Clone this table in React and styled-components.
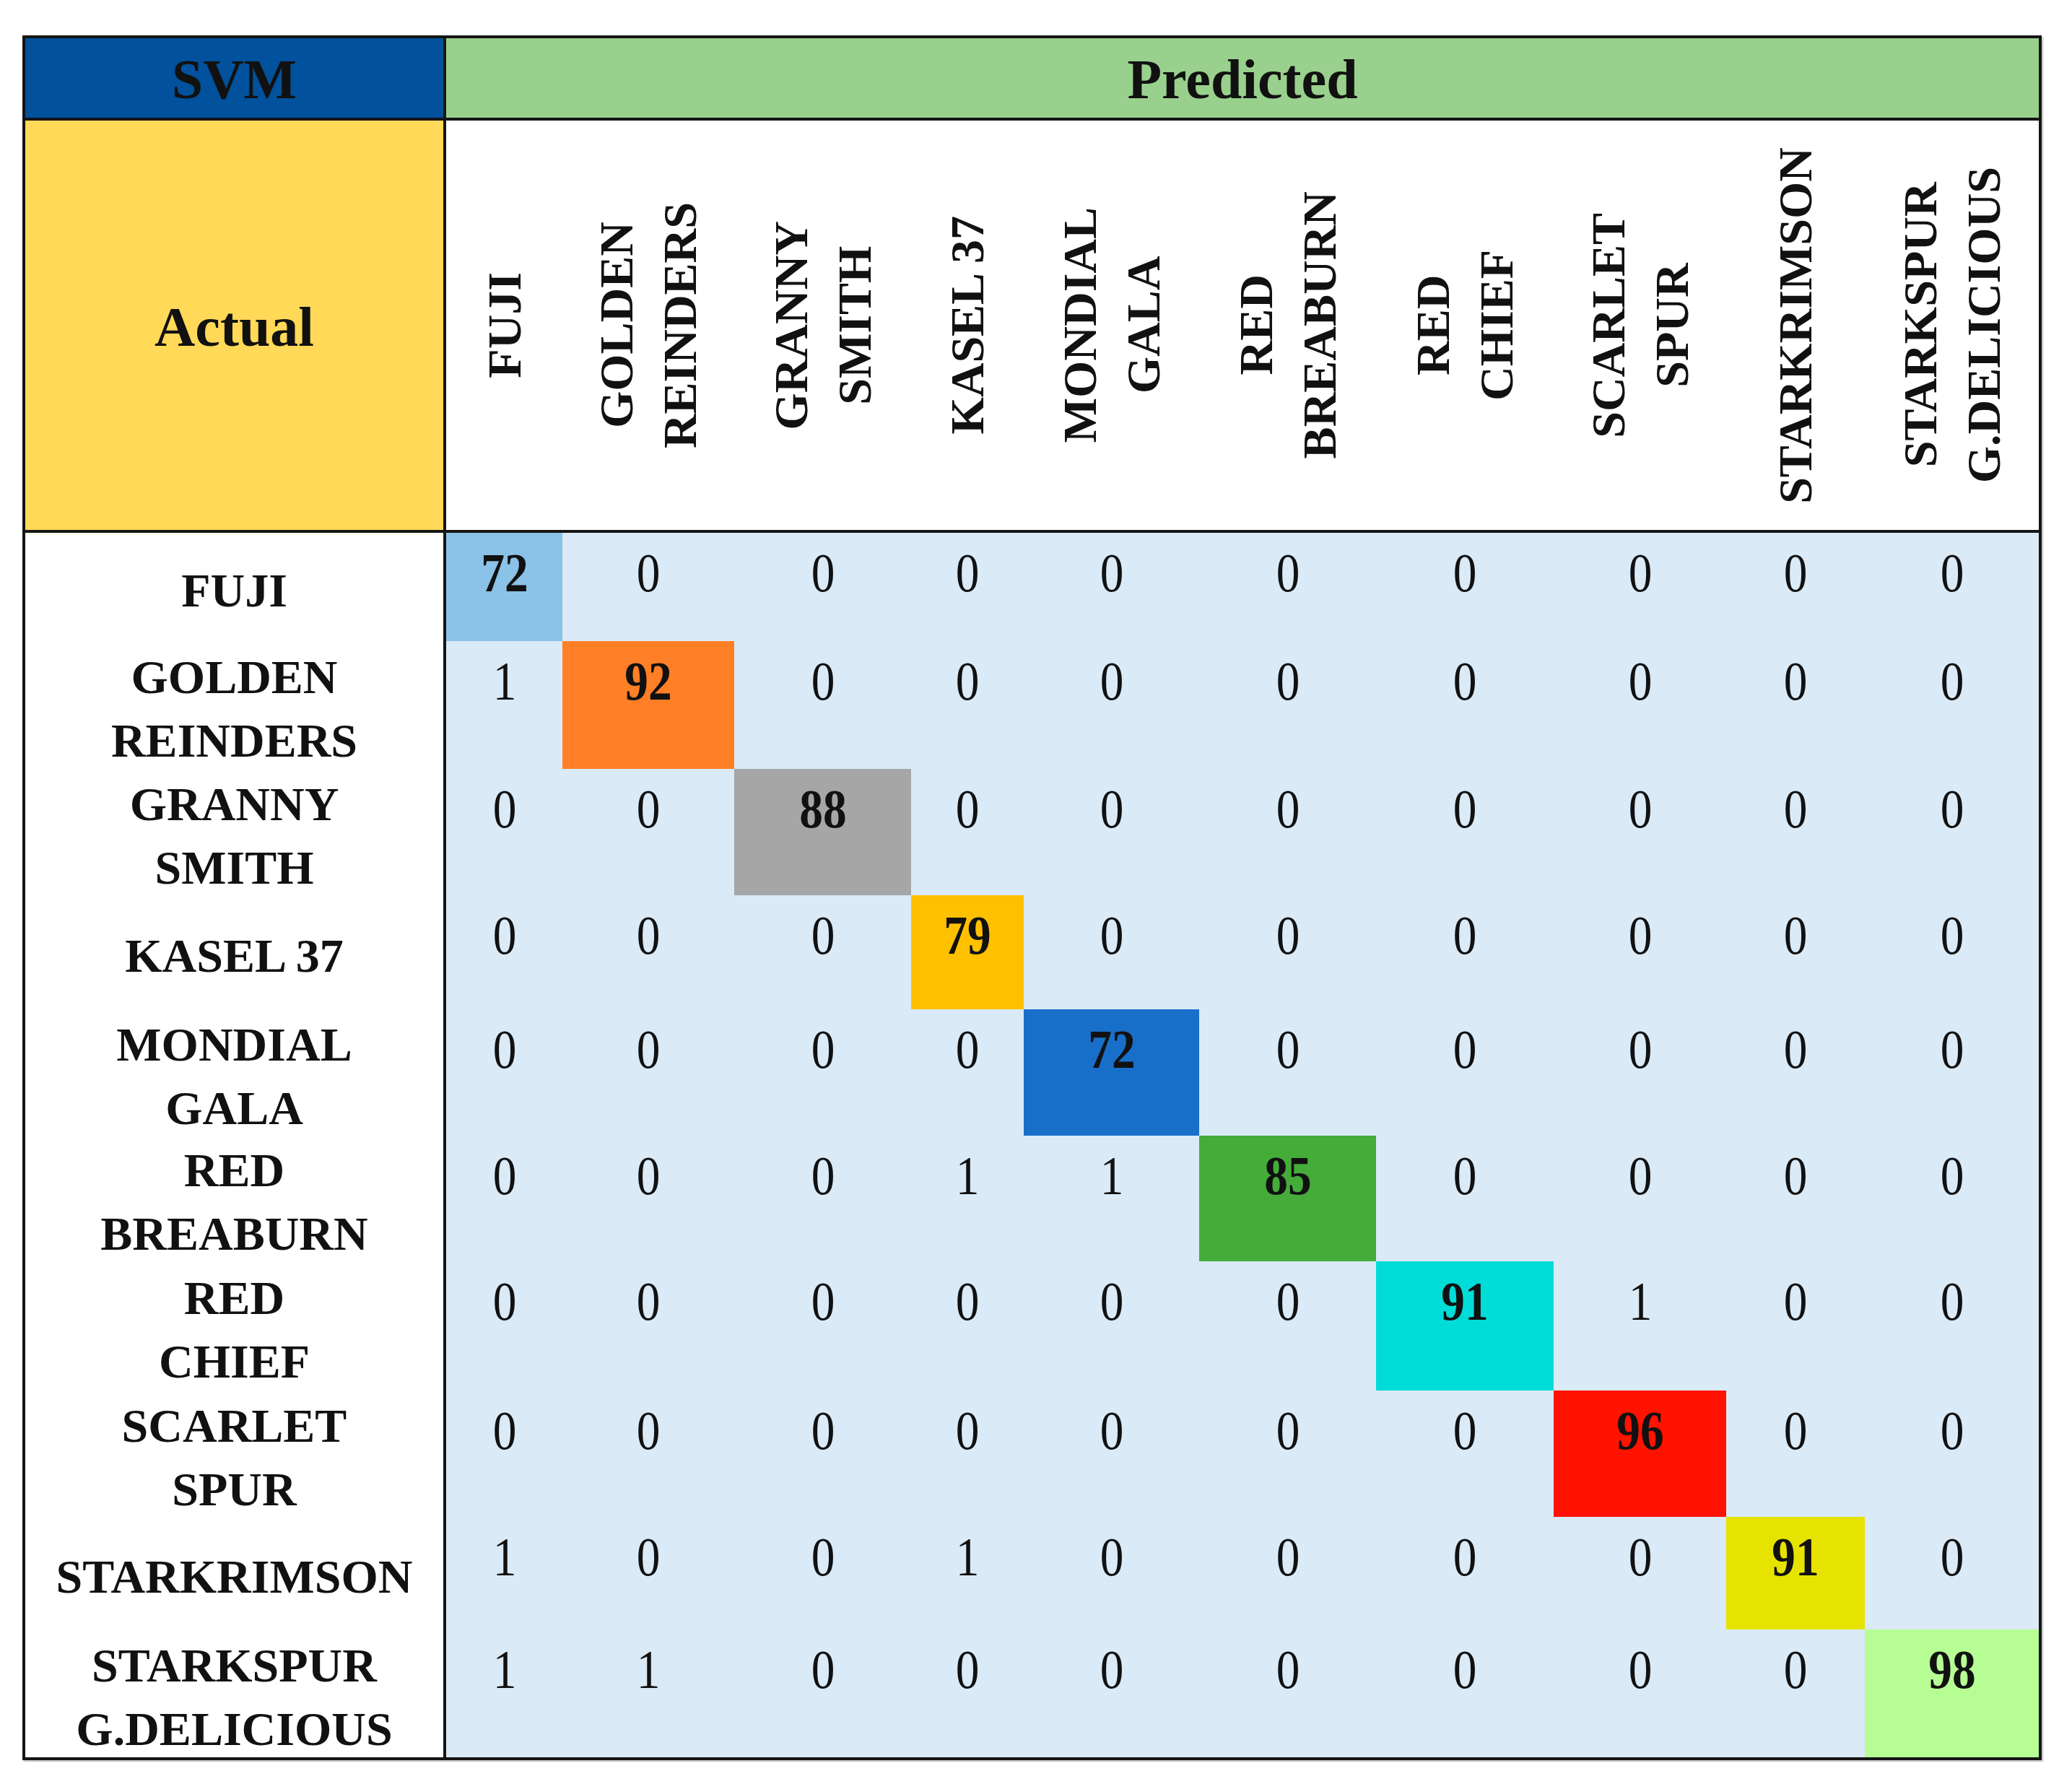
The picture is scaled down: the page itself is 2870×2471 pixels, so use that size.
import styled, { createGlobalStyle } from 'styled-components'

const GlobalStyle = createGlobalStyle`
  html, body {
    margin: 0;
    padding: 0;
    background: #ffffff;
  }
  body {
    font-family: "Liberation Serif", "DejaVu Serif", serif;
    color: #111111;
  }
`;

// apple classes: label lines, column width, row height
const classes = [
  { lines: ['FUJI'], width: 161, height: 150, color: '#8bc2e7' },
  { lines: ['GOLDEN', 'REINDERS'], width: 238, height: 177, color: '#ff7f27' },
  { lines: ['GRANNY', 'SMITH'], width: 245, height: 175, color: '#a6a6a6' },
  { lines: ['KASEL 37'], width: 156, height: 158, color: '#ffc000' },
  { lines: ['MONDIAL', 'GALA'], width: 243, height: 175, color: '#186fca' },
  { lines: ['RED', 'BREABURN'], width: 245, height: 174, color: '#45ac3a' },
  { lines: ['RED', 'CHIEF'], width: 246, height: 179, color: '#00dcd8' },
  { lines: ['SCARLET', 'SPUR'], width: 239, height: 175, color: '#ff1200' },
  { lines: ['STARKRIMSON'], width: 192, height: 156, color: '#e7e300' },
  { lines: ['STARKSPUR', 'G.DELICIOUS'], width: 241, height: 177, color: '#b6fe94' },
];

const matrix = [
  [72, 0, 0, 0, 0, 0, 0, 0, 0, 0],
  [1, 92, 0, 0, 0, 0, 0, 0, 0, 0],
  [0, 0, 88, 0, 0, 0, 0, 0, 0, 0],
  [0, 0, 0, 79, 0, 0, 0, 0, 0, 0],
  [0, 0, 0, 0, 72, 0, 0, 0, 0, 0],
  [0, 0, 0, 1, 1, 85, 0, 0, 0, 0],
  [0, 0, 0, 0, 0, 0, 91, 1, 0, 0],
  [0, 0, 0, 0, 0, 0, 0, 96, 0, 0],
  [1, 0, 0, 1, 0, 0, 0, 0, 91, 0],
  [1, 1, 0, 0, 0, 0, 0, 0, 0, 98],
];

function App() {
  const cols = `583px ${classes.map((c) => c.width + 'px').join(' ')}`;
  const rows = `114px 571px ${classes.map((c) => c.height + 'px').join(' ')}`;

  return (
    <>
      <GlobalStyle />
      <Page>
        <Matrix $cols={cols} $rows={rows}>
          <ModelCell>SVM</ModelCell>
          <PredictedBar>Predicted</PredictedBar>

          <ActualCell>Actual</ActualCell>
          {classes.map((c) => (
            <ColHead key={'h' + c.lines.join()}>
              <VerticalText>
                {c.lines.map((l, i) => (
                  <span key={l}>
                    {i > 0 && <br />}
                    {l}
                  </span>
                ))}
              </VerticalText>
            </ColHead>
          ))}

          {classes.map((c, r) => (
            <Row key={'r' + r} label={c.lines} values={matrix[r]} rowIndex={r} />
          ))}
        </Matrix>
      </Page>
    </>
  );
}

function Row({ label, values, rowIndex }) {
  return (
    <>
      <RowLabel>
        <div>
          {label.map((l) => (
            <LabelLine key={l}>{l}</LabelLine>
          ))}
        </div>
      </RowLabel>
      {values.map((v, c) => {
        const diag = c === rowIndex;
        return (
          <ValueCell key={c} $bg={diag ? classes[c].color : '#daeaf6'} $bold={diag}>
            <Digits>{v}</Digits>
          </ValueCell>
        );
      })}
    </>
  );
}

const Page = styled.div`
  padding: 49px 0 40px 31px;
`;

const Matrix = styled.div`
  display: grid;
  width: max-content;
  grid-template-columns: ${(p) => p.$cols};
  grid-template-rows: ${(p) => p.$rows};
  border: 4px solid #151515;
  box-shadow: 2px 2px 2px rgba(0, 0, 0, 0.25);
  background: #ffffff;

  & > * {
    box-sizing: border-box;
  }
`;

const TitleCell = styled.div`
  display: flex;
  align-items: center;
  justify-content: center;
  font-size: 78px;
  font-weight: 700;
  line-height: 1;
  padding-top: 4px;
`;

const ModelCell = styled(TitleCell)`
  background: #01519c;
  border-right: 4px solid #151515;
  border-bottom: 4px solid #151515;
`;

const PredictedBar = styled(TitleCell)`
  grid-column: 2 / -1;
  background: #99d08d;
  border-bottom: 4px solid #151515;
`;

const ActualCell = styled(TitleCell)`
  background: #ffd957;
  border-right: 4px solid #151515;
  border-bottom: 4px solid #151515;
`;

const ColHead = styled.div`
  display: flex;
  align-items: center;
  justify-content: center;
  background: #ffffff;
  border-bottom: 4px solid #151515;
  overflow: hidden;
`;

const VerticalText = styled.div`
  writing-mode: vertical-rl;
  transform: rotate(180deg);
  text-align: center;
  white-space: nowrap;
  font-size: 66px;
  font-weight: 700;
  line-height: 88px;
`;

const RowLabel = styled.div`
  display: flex;
  align-items: center;
  justify-content: center;
  padding-top: 10px;
  background: #ffffff;
  border-right: 4px solid #151515;
  text-align: center;
`;

const LabelLine = styled.div`
  font-size: 66px;
  font-weight: 700;
  line-height: 88px;
  white-space: nowrap;
`;

const ValueCell = styled.div`
  background: ${(p) => p.$bg};
  text-align: center;
  font-size: 76px;
  line-height: 76px;
  padding-top: 17px;
  font-weight: ${(p) => (p.$bold ? 700 : 400)};
`;

// the digits in the source are tall and narrow
const Digits = styled.span`
  display: inline-block;
  transform: scaleX(0.86);
`;

export default App
